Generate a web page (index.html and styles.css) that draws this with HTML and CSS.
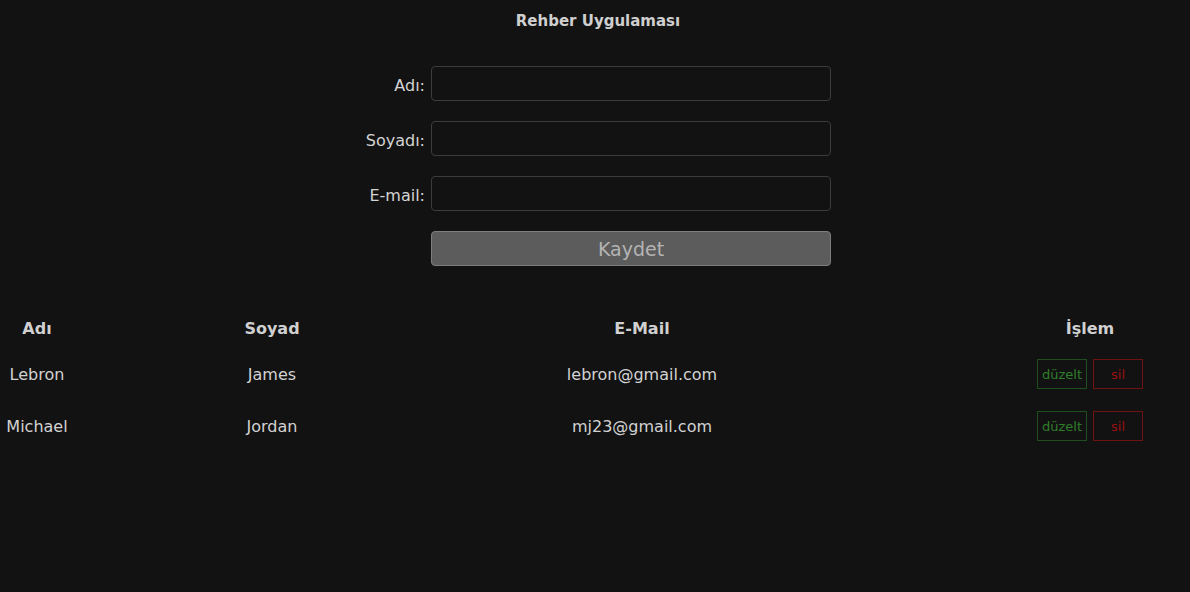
FILE: index.html
```html
<!DOCTYPE html>
<html lang="tr">
<head>
<meta charset="utf-8">
<title>Rehber Uygulaması</title>
<link rel="stylesheet" href="styles.css">
</head>
<body>
<div class="app">
  <h1 class="title">Rehber Uygulaması</h1>
  <form class="form">
    <label class="label" for="ad">Adı:</label>
    <input class="field" id="ad" type="text">
    <label class="label" for="soyad">Soyadı:</label>
    <input class="field" id="soyad" type="text">
    <label class="label" for="mail">E-mail:</label>
    <input class="field" id="mail" type="text">
    <span></span>
    <button class="save" type="button">Kaydet</button>
  </form>
  <div class="table">
    <div class="row head">
      <div class="cell">Adı</div>
      <div class="cell">Soyad</div>
      <div class="cell">E-Mail</div>
      <div class="cell ops">İşlem</div>
    </div>
    <div class="row">
      <div class="cell">Lebron</div>
      <div class="cell">James</div>
      <div class="cell">lebron@gmail.com</div>
      <div class="cell ops"><button class="btn edit">düzelt</button><button class="btn del">sil</button></div>
    </div>
    <div class="row">
      <div class="cell">Michael</div>
      <div class="cell">Jordan</div>
      <div class="cell">mj23@gmail.com</div>
      <div class="cell ops"><button class="btn edit">düzelt</button><button class="btn del">sil</button></div>
    </div>
  </div>
</div>
</body>
</html>
```
FILE: styles.css
```css
html, body {
  margin: 0;
  padding: 0;
  background: #121212;
  color: #d2d2d2;
  font-family: "DejaVu Sans", Verdana, sans-serif;
  font-size: 16px;
}
.app {
  width: 1190px;
  min-height: 592px;
  padding-top: 11px;
}
.title {
  margin: 0;
  padding-left: 6px;
  font-size: 15px;
  line-height: 20px;
  font-weight: bold;
  text-align: center;
  color: #cfcfcf;
}
.form {
  display: grid;
  grid-template-columns: 425px 400px;
  column-gap: 6px;
  row-gap: 20px;
  margin-top: 35px;
  align-items: center;
}
.label {
  text-align: right;
  color: #d4d4d4;
  font-size: 16px;
  padding-top: 3px;
}
.field {
  box-sizing: border-box;
  height: 35px;
  width: 400px;
  margin: 0;
  background: #121212;
  border: 1px solid #3c3c3c;
  border-radius: 4px;
  color: #ddd;
  font-family: inherit;
  font-size: 16px;
  padding: 0 8px;
  outline: none;
}
.save {
  box-sizing: border-box;
  height: 35px;
  width: 400px;
  margin: 0;
  background: #5c5c5c;
  border: 1px solid #7e7e7e;
  border-radius: 4px;
  color: #b4b4b4;
  font-family: inherit;
  font-size: 19px;
  padding: 0;
}
.table {
  margin-top: 42px;
}
.row {
  display: grid;
  grid-template-columns: 74px 396px 344px 376px;
  height: 52px;
  align-items: center;
}
.row.head {
  height: 40px;
  font-weight: bold;
  font-size: 16px;
  color: #d0d0d0;
}
.cell {
  text-align: center;
  white-space: nowrap;
}
.cell.ops {
  padding-left: 176px;
  display: flex;
  justify-content: center;
  gap: 6px;
}
.btn {
  box-sizing: border-box;
  width: 50px;
  height: 30px;
  margin: 0;
  padding: 0;
  background: transparent;
  font-family: inherit;
  font-size: 13px;
  border-radius: 0;
}
.edit {
  border: 1px solid #1f4f1f;
  color: #2f7f2a;
}
.del {
  border: 1px solid #6e1212;
  color: #9a1010;
}
```
